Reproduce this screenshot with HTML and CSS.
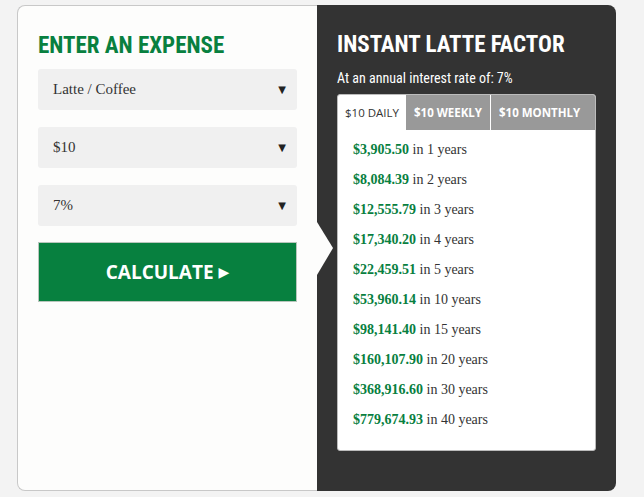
FILE: index.html
```html
<!DOCTYPE HTML>
<html>
<head>
<meta name="viewport" content="width=device-width, initial-scale=1">
<title>instant latte factor</title>
<link rel="stylesheet" href="styles.css">
</head>
<body>
<div class="calc">
  <div class="calc-left">
    <h2 class="title title-green">ENTER AN EXPENSE</h2>
    <div class="pick"><span>Latte / Coffee</span><span class="caret">&#9660;</span></div>
    <div class="pick"><span>$10</span><span class="caret">&#9660;</span></div>
    <div class="pick"><span>7%</span><span class="caret">&#9660;</span></div>
    <button class="go">CALCULATE <span class="go-arrow">&#9654;</span></button>
  </div>
  <div class="calc-right">
    <div class="notch"></div>
    <h2 class="title">INSTANT LATTE FACTOR</h2>
    <p class="rate">At an annual interest rate of: 7%</p>
    <div class="tabs">
      <div class="tab-row">
        <div class="tab on">$10 DAILY</div>
        <div class="tab">$10 WEEKLY</div>
        <div class="tab">$10 MONTHLY</div>
      </div>
      <ul class="results">
        <li><b>$3,905.50</b> in 1 years</li>
        <li><b>$8,084.39</b> in 2 years</li>
        <li><b>$12,555.79</b> in 3 years</li>
        <li><b>$17,340.20</b> in 4 years</li>
        <li><b>$22,459.51</b> in 5 years</li>
        <li><b>$53,960.14</b> in 10 years</li>
        <li><b>$98,141.40</b> in 15 years</li>
        <li><b>$160,107.90</b> in 20 years</li>
        <li><b>$368,916.60</b> in 30 years</li>
        <li><b>$779,674.93</b> in 40 years</li>
      </ul>
    </div>
  </div>
</div>
</body>
</html>
```

FILE: styles.css
```css
body {
  margin: 0;
  background: #f3f3f3;
  font-family: "Liberation Serif", serif;
}
.calc {
  display: flex;
  margin: 5px 0 0 17px;
  width: 599px;
  height: 486px;
}
.calc-left {
  flex: none;
  width: 300px;
  box-sizing: border-box;
  background: #fdfdfc;
  border: 1px solid #c8c8c8;
  border-right: none;
  border-radius: 8px 0 0 8px;
  padding: 0 20px;
}
.calc-right {
  position: relative;
  flex: 1;
  min-width: 0;
  background: #333333;
  border-radius: 0 8px 8px 0;
  padding: 0 20px 0 20px;
}
.notch {
  position: absolute;
  left: 0;
  top: 217px;
  width: 0;
  height: 0;
  border-top: 26px solid transparent;
  border-bottom: 27px solid transparent;
  border-left: 16px solid #fdfdfc;
}
.title {
  margin: 26px 0 0 0;
  font-family: "Liberation Sans Narrow", "Roboto Condensed", "DejaVu Sans Condensed", sans-serif;
  font-weight: 700;
  font-size: 23px;
  line-height: 27px;
  color: #fff;
}
.title-green {
  color: #08803f;
}
.pick {
  display: flex;
  justify-content: space-between;
  align-items: center;
  height: 41px;
  background: #f0f0f0;
  border-radius: 3px;
  padding: 0 11px 0 15px;
  margin-top: 17px;
  font-size: 15px;
  color: #333;
}
.calc-left .title + .pick {
  margin-top: 10px;
}
.caret {
  font-family: "DejaVu Sans", sans-serif;
  font-size: 10px;
  color: #222;
}
.go {
  display: block;
  width: 100%;
  height: 60px;
  margin-top: 16px;
  background: #07803f;
  border: 1px solid #b8c6bc;
  color: #fff;
  font-family: "Open Sans", sans-serif;
  font-weight: 700;
  font-size: 19px;
}
.go-arrow {
  font-family: "DejaVu Sans", sans-serif;
  font-size: 14px;
  vertical-align: 2px;
}
.rate {
  margin: 12px 0 0 0;
  font-family: "Liberation Sans Narrow", "Roboto Condensed", "DejaVu Sans Condensed", sans-serif;
  font-size: 14px;
  color: #fff;
}
.tabs {
  box-sizing: border-box;
  margin-top: 8px;
  width: 259px;
  background: #fff;
  border: 1px solid #bbb;
  border-radius: 3px;
  overflow: hidden;
}
.tab-row {
  display: flex;
  height: 35px;
  background: #999;
}
.tab {
  flex: none;
  display: flex;
  align-items: center;
  padding: 0 8px;
  white-space: nowrap;
  font-family: "Open Sans", sans-serif;
  font-size: 11.5px;
  font-weight: 700;
  color: #fff;
}
.tab + .tab {
  border-left: 1px solid #fff;
}
.tab.on {
  background: #fff;
  color: #333;
  font-weight: 400;
  padding: 0 7px;
}
.tab.on + .tab {
  border-left: none;
}
.results {
  list-style: none;
  margin: 0;
  padding: 5px 0 15px 15px;
}
.results li {
  height: 30px;
  line-height: 30px;
  font-size: 14px;
  color: #333;
}
.results b {
  color: #08803f;
}
```
